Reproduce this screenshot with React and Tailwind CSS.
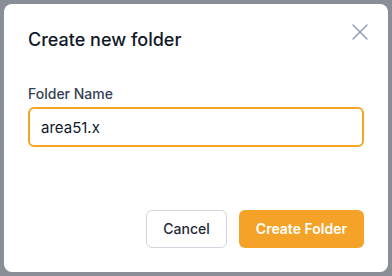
import { X } from 'lucide-react'

export default function App() {
  return (
    <div className="w-[392px] h-[276px] bg-[#8a8e97] p-1" style={{ fontFamily: 'Inter, "Noto Sans", sans-serif' }}>
      <div className="w-full h-full bg-white rounded-lg flex flex-col px-6 pt-6 pb-6">
        {/* Header */}
        <div className="flex items-start justify-between">
          <h2 className="text-lg leading-7 font-medium text-gray-900 mt-[-2px]">Create new folder</h2>
          <button className="w-7 h-7 flex items-center justify-center text-gray-400 mt-[-10px] mr-[-10px]">
            <X size={28} strokeWidth={1.3} />
          </button>
        </div>

        {/* Body */}
        <div className="mt-[30px]">
          <label className="block text-sm leading-5 font-medium text-gray-700">Folder Name</label>
          <input
            className="mt-[3px] w-full h-[40px] border-2 border-[#f5a524] rounded-md px-[11px] text-[15px] text-gray-900 outline-none"
            defaultValue="area51.x"
          />
        </div>

        {/* Footer */}
        <div className="mt-auto flex justify-end gap-3">
          <button className="h-[38px] px-4 border border-gray-300 rounded-md text-sm font-medium text-gray-800 bg-white">
            Cancel
          </button>
          <button className="h-[38px] px-[17px] rounded-md text-sm font-semibold text-white bg-[#f5a328]">
            Create Folder
          </button>
        </div>
      </div>
    </div>
  )
}
